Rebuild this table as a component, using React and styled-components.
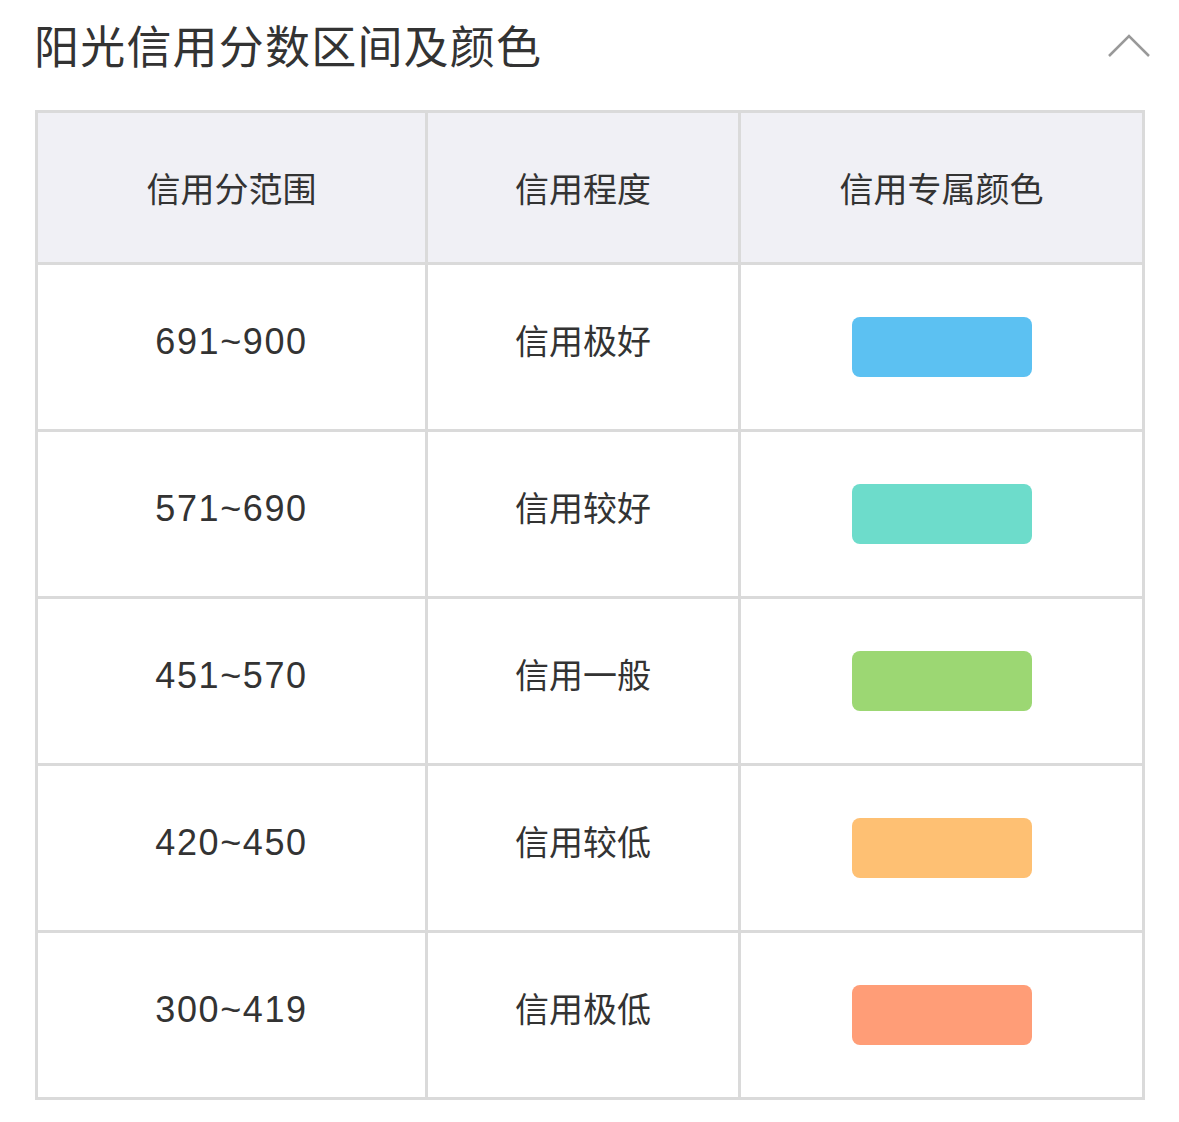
import React from "react";
import styled, { createGlobalStyle } from "styled-components";

const GlobalStyle = createGlobalStyle`
  body {
    margin: 0;
    background: #fff;
    font-family: "Noto Sans CJK SC", "Noto Sans", sans-serif;
    color: #333;
  }
`;

const Page = styled.div`
  width: 1179px;
  padding: 0 34px 0 35px;
  box-sizing: border-box;
`;

const TitleBar = styled.div`
  display: flex;
  align-items: center;
  justify-content: space-between;
  height: 95px;
`;

const Title = styled.h2`
  margin: -6px 0 0 -1px;
  font-size: 45px;
  font-weight: 400;
  color: #333;
  letter-spacing: 1.2px;
`;

const Toggle = styled.svg`
  width: 46px;
  height: 26px;
  margin-right: -7px;
  margin-top: -6px;
`;

const Grid = styled.div`
  margin-top: 15px;
  display: grid;
  grid-template-columns: 387px 310px 401px;
  grid-auto-rows: 164px;
  grid-template-rows: 149px;
  gap: 3px;
  padding: 3px;
  background: #dadada;
`;

const Cell = styled.div`
  display: flex;
  align-items: center;
  justify-content: center;
  background: ${(p) => (p.$head ? "#f0f0f5" : "#fff")};
  font-size: 34px;
  color: #333;
  padding-bottom: ${(p) => (p.$head ? "0" : "16px")};
`;

const Num = styled.span`
  font-family: "Helvetica Neue", "Liberation Sans", "Noto Sans CJK SC", sans-serif;
  font-size: 36px;
  letter-spacing: 1.6px;
  margin-top: 6px;
`;

const Swatch = styled.div`
  width: 180px;
  height: 60px;
  border-radius: 8px;
  background: ${(p) => p.$color};
`;

const rows = [
  { range: "691~900", level: "信用极好", color: "#5cc1f2" },
  { range: "571~690", level: "信用较好", color: "#6ddccb" },
  { range: "451~570", level: "信用一般", color: "#9cd773" },
  { range: "420~450", level: "信用较低", color: "#fec073" },
  { range: "300~419", level: "信用极低", color: "#ff9d77" },
];

const App = () => {
  return (
    <Page>
      <GlobalStyle />
      <TitleBar>
        <Title>阳光信用分数区间及颜色</Title>
        <Toggle viewBox="0 0 46 26">
          <polyline
            points="3,24 23,4 43,24"
            fill="none"
            stroke="#999"
            strokeWidth="2.5"
          />
        </Toggle>
      </TitleBar>
      <Grid>
        <Cell $head>信用分范围</Cell>
        <Cell $head>信用程度</Cell>
        <Cell $head>信用专属颜色</Cell>
        {rows.map((item) => (
          <React.Fragment key={item.range}>
            <Cell>
              <Num>{item.range}</Num>
            </Cell>
            <Cell>{item.level}</Cell>
            <Cell style={{ paddingBottom: 0 }}>
              <Swatch $color={item.color} />
            </Cell>
          </React.Fragment>
        ))}
      </Grid>
    </Page>
  );
};

export default App;
